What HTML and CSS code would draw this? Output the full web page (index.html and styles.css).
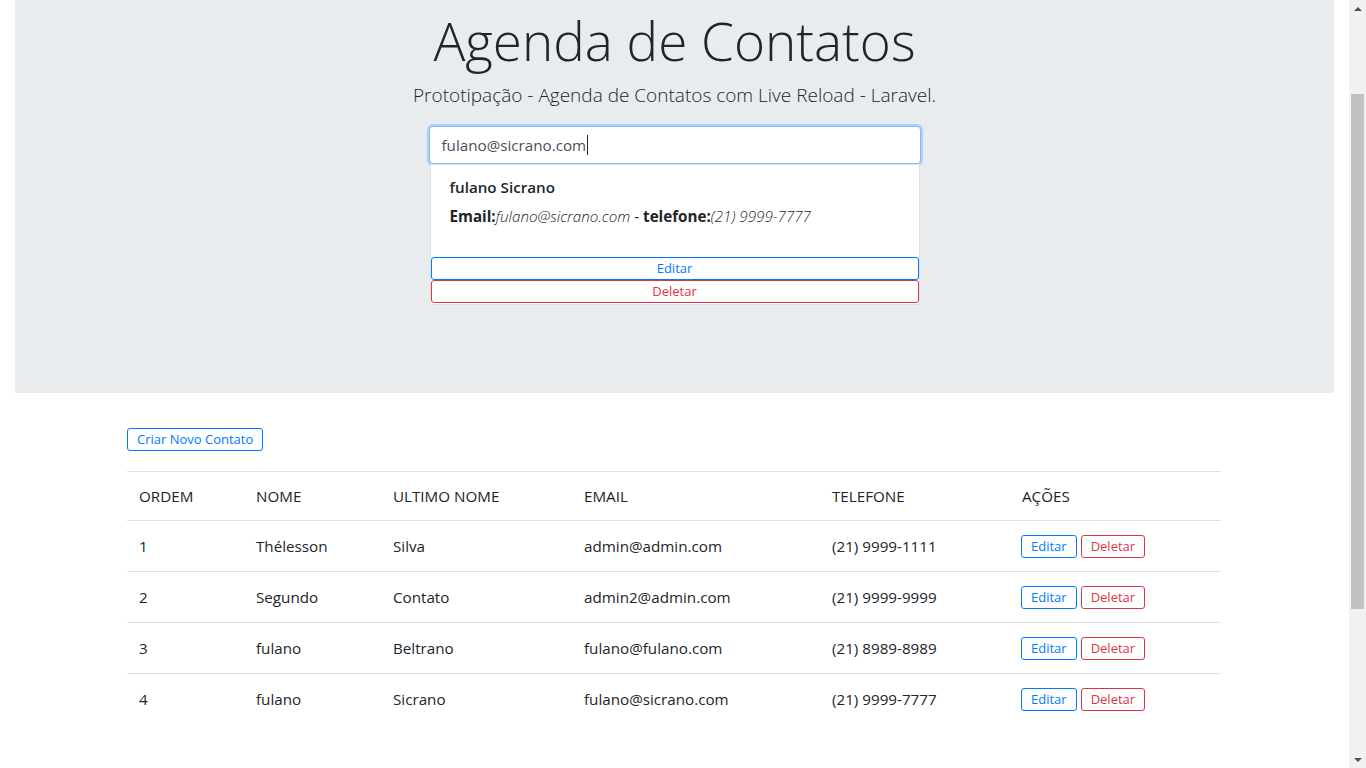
FILE: index.html
```html
<!DOCTYPE html>
<html lang="pt-BR">
<head>
<meta charset="utf-8">
<title>Agenda de Contatos</title>
<link rel="stylesheet" href="styles.css">
</head>
<body>
<div class="viewport">
  <div class="page">
    <header class="jumbotron">
      <h1 class="display">Agenda de Contatos</h1>
      <p class="lead">Prototipação - Agenda de Contatos com Live Reload - Laravel.</p>
      <div class="search">
        <div class="search-input"><span class="search-text">fulano@sicrano.com</span><span class="caret"></span></div>
        <div class="result-card">
          <div class="result-body">
            <div class="result-name">fulano Sicrano</div>
            <div class="result-info"><strong>Email:</strong><em>fulano@sicrano.com</em> - <strong>telefone:</strong><em>(21) 9999-7777</em></div>
          </div>
          <button class="btn btn-block btn-primary-outline">Editar</button>
          <button class="btn btn-block btn-danger-outline">Deletar</button>
        </div>
      </div>
    </header>
    <main class="content">
      <button class="btn btn-primary-outline btn-create">Criar Novo Contato</button>
      <table class="contacts">
        <thead>
          <tr><th class="c-ordem">ORDEM</th><th class="c-nome">NOME</th><th class="c-ultimo">ULTIMO NOME</th><th class="c-email">EMAIL</th><th class="c-tel">TELEFONE</th><th class="c-acoes">AÇÕES</th></tr>
        </thead>
        <tbody>
          <tr><td>1</td><td>Thélesson</td><td>Silva</td><td>admin@admin.com</td><td>(21) 9999-1111</td><td><div class="actions"><button class="btn btn-primary-outline">Editar</button><button class="btn btn-danger-outline">Deletar</button></div></td></tr>
          <tr><td>2</td><td>Segundo</td><td>Contato</td><td>admin2@admin.com</td><td>(21) 9999-9999</td><td><div class="actions"><button class="btn btn-primary-outline">Editar</button><button class="btn btn-danger-outline">Deletar</button></div></td></tr>
          <tr><td>3</td><td>fulano</td><td>Beltrano</td><td>fulano@fulano.com</td><td>(21) 8989-8989</td><td><div class="actions"><button class="btn btn-primary-outline">Editar</button><button class="btn btn-danger-outline">Deletar</button></div></td></tr>
          <tr><td>4</td><td>fulano</td><td>Sicrano</td><td>fulano@sicrano.com</td><td>(21) 9999-7777</td><td><div class="actions"><button class="btn btn-primary-outline">Editar</button><button class="btn btn-danger-outline">Deletar</button></div></td></tr>
        </tbody>
      </table>
    </main>
  </div>
  <div class="scrollbar">
    <div class="sb-arrow"><span class="tri tri-up"></span></div>
    <div class="sb-track"><div class="sb-thumb"></div></div>
    <div class="sb-arrow"><span class="tri tri-down"></span></div>
  </div>
</div>
</body>
</html>
```

FILE: styles.css
```css
* { box-sizing: border-box; }

html, body {
  margin: 0;
  padding: 0;
  height: 100%;
  overflow: hidden;
  background: #fff;
}

body {
  font-family: "Open Sans", "Noto Sans", "Liberation Sans", sans-serif;
  font-size: 15.2px;
  line-height: 24px;
  color: #212529;
}

.viewport {
  display: flex;
  width: 1366px;
  height: 768px;
}

.page {
  width: 1349px;
  height: 768px;
  padding: 0 15px;
  overflow: hidden;
}

/* ---------- Jumbotron ---------- */
.jumbotron {
  background: #e9ecef;
  padding: 7px 0 88px;
  display: flex;
  flex-direction: column;
  align-items: center;
  margin-bottom: 35px;
}

.display {
  margin: 0 0 6px;
  font-size: 53px;
  font-weight: 300;
  line-height: 67px;
}

.lead {
  margin: 0 0 16px;
  font-size: 19px;
  font-weight: 300;
  line-height: 30px;
}

.search {
  width: 492px;
  display: flex;
  flex-direction: column;
  align-items: center;
}

.search-input {
  width: 492px;
  height: 38px;
  background: #fff;
  border: 1px solid #80bdff;
  border-radius: 4px;
  box-shadow: 0 0 0 2px rgba(0, 123, 255, 0.25);
  padding: 0 12px;
  display: flex;
  align-items: center;
  font-size: 15.2px;
  color: #495057;
}

.caret {
  display: inline-block;
  width: 1px;
  height: 20px;
  background: #212529;
  margin-left: 1px;
}

.result-card {
  width: 490px;
  background: #fff;
  border: 1px solid #dfe2e5;
  padding-bottom: 1px;
  position: relative;
}

.result-body {
  padding: 10px 19px 29px;
}

.result-name {
  font-weight: 600;
  line-height: 24px;
  margin-bottom: 5px;
}

.result-info {
  line-height: 24px;
  font-size: 15.2px;
}

.result-info strong { font-weight: 700; }
.result-info em { font-style: italic; font-weight: 300; }

/* ---------- Buttons ---------- */
.btn {
  display: inline-block;
  font-family: inherit;
  font-size: 13px;
  line-height: 21px;
  height: 23px;
  padding: 0 9px;
  background: transparent;
  border: 1px solid;
  border-radius: 3px;
  cursor: pointer;
}

.btn-block {
  display: block;
  width: 100%;
}

.btn-primary-outline { color: #007bff; border-color: #007bff; }
.btn-danger-outline { color: #dc3545; border-color: #dc3545; }

/* ---------- Content ---------- */
.content {
  width: 1094px;
  margin-left: 112px;
}

.btn-create {
  display: block;
}

.contacts {
  width: 100%;
  margin-top: 20px;
  border-collapse: collapse;
}

.contacts th,
.contacts td {
  text-align: left;
  font-weight: 400;
  padding: 12px;
  border-top: 1px solid #dee2e6;
  vertical-align: middle;
}

.contacts th { line-height: 24px; }
.contacts td { line-height: 26px; }

.actions {
  display: flex;
  align-items: center;
  gap: 4px;
  height: 26px;
  margin-left: -1px;
}

.c-ordem { width: 117px; }
.c-nome { width: 137px; }
.c-ultimo { width: 191px; }
.c-email { width: 248px; }
.c-tel { width: 190px; }
.c-acoes { width: 211px; }

/* ---------- Scrollbar ---------- */
.scrollbar {
  width: 17px;
  height: 768px;
  background: #f1f1f1;
  display: flex;
  flex-direction: column;
}

.sb-arrow {
  height: 17px;
  display: flex;
  align-items: center;
  justify-content: center;
}

.tri {
  width: 0;
  height: 0;
  border-left: 4px solid transparent;
  border-right: 4px solid transparent;
}

.tri-up { border-bottom: 4px solid #505050; }
.tri-down { border-top: 4px solid #505050; }

.sb-track {
  flex: 1;
  padding: 77px 2px 0;
}

.sb-thumb {
  height: 515px;
  background: #c1c1c1;
}
```
